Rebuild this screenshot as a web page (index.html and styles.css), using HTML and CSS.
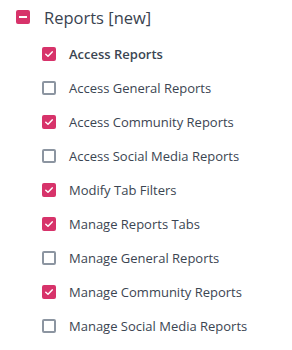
FILE: index.html
```html
<!DOCTYPE html>
<html>
<head>
<meta charset="utf-8">
<link rel="stylesheet" href="styles.css">
</head>
<body>
<div class="group">
  <div class="group-head">
    <span class="box checked"><span class="minus"></span></span>
    <span class="group-title">Reports [new]</span>
  </div>
  <ul class="items">
    <li class="item"><span class="box checked"><svg viewBox="0 0 14 14" class="tick"><path d="M3.8 7.2 L6 9.2 L10.2 4.9" /></svg></span><span class="label bold">Access Reports</span></li>
    <li class="item"><span class="box"></span><span class="label">Access General Reports</span></li>
    <li class="item"><span class="box checked"><svg viewBox="0 0 14 14" class="tick"><path d="M3.8 7.2 L6 9.2 L10.2 4.9" /></svg></span><span class="label">Access Community Reports</span></li>
    <li class="item"><span class="box"></span><span class="label">Access Social Media Reports</span></li>
    <li class="item"><span class="box checked"><svg viewBox="0 0 14 14" class="tick"><path d="M3.8 7.2 L6 9.2 L10.2 4.9" /></svg></span><span class="label">Modify Tab Filters</span></li>
    <li class="item"><span class="box checked"><svg viewBox="0 0 14 14" class="tick"><path d="M3.8 7.2 L6 9.2 L10.2 4.9" /></svg></span><span class="label">Manage Reports Tabs</span></li>
    <li class="item"><span class="box"></span><span class="label">Manage General Reports</span></li>
    <li class="item"><span class="box checked"><svg viewBox="0 0 14 14" class="tick"><path d="M3.8 7.2 L6 9.2 L10.2 4.9" /></svg></span><span class="label">Manage Community Reports</span></li>
    <li class="item"><span class="box"></span><span class="label">Manage Social Media Reports</span></li>
  </ul>
</div>
</body>
</html>
```
FILE: styles.css
```css
html, body {
  margin: 0;
  padding: 0;
  background: #ffffff;
}
body {
  font-family: "Open Sans", sans-serif;
  color: #3b4552;
}
.group {
  padding: 6px 0 0 16px;
}
.group-head {
  display: flex;
  align-items: center;
  gap: 14px;
  height: 22px;
}
.group-title {
  font-size: 16.5px;
  color: #3a4350;
}
.box {
  width: 14px;
  height: 14px;
  box-sizing: border-box;
  border: 2px solid #8c95a1;
  border-radius: 2px;
  display: flex;
  align-items: center;
  justify-content: center;
  flex: none;
}
.box.checked {
  background: #d7336a;
  border-color: #d7336a;
}
.minus {
  width: 8px;
  height: 2px;
  background: #fff;
}
.tick {
  width: 14px;
  height: 14px;
  flex: none;
}
.tick path {
  fill: none;
  stroke: #fff;
  stroke-width: 1.5;
  stroke-linecap: round;
  stroke-linejoin: round;
}
.items {
  list-style: none;
  margin: 0;
  padding: 9px 0 0 26px;
}
.item {
  display: flex;
  align-items: center;
  gap: 13px;
  height: 34px;
}
.label {
  font-size: 13px;
}
.label.bold {
  font-weight: 600;
}
```
